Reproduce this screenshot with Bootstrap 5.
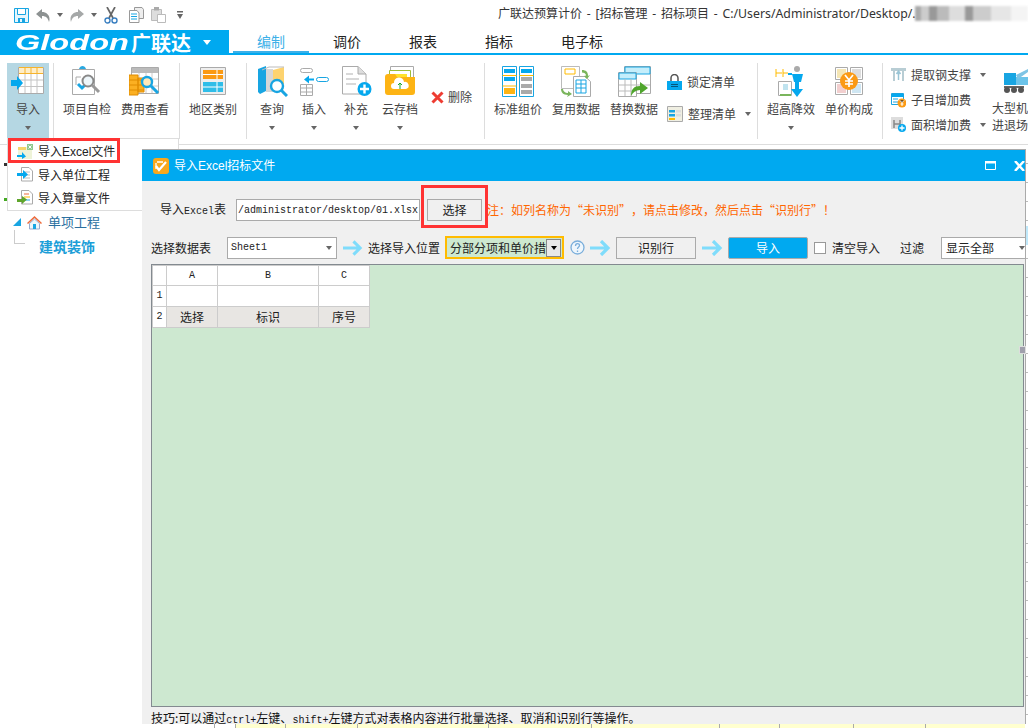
<!DOCTYPE html>
<html lang="zh-CN">
<head>
<meta charset="utf-8">
<title>广联达预算计价</title>
<link rel="stylesheet" href="https://cdn.jsdelivr.net/npm/bootstrap@5.3.0/dist/css/bootstrap.min.css">
<style>
html,body{height:728px;overflow:hidden}
body{font:12px/16px "Noto Sans CJK SC","Noto Sans",sans-serif;color:#222;background:#fff;position:relative;width:1028px}
svg{display:block;flex:none}
.lat{font:10px/16px "Liberation Mono",monospace}
.tbar{height:30px;padding-left:14px}
.qat{gap:7px}
.tri{display:inline-block;width:0;height:0;border:3.5px solid transparent;border-top:4px solid #666;border-bottom:0;flex:none}
.title-text{position:absolute;left:498px;top:6px;white-space:nowrap;font:12px/16px "Noto Sans","Noto Sans CJK SC",sans-serif;color:#333;word-spacing:1.7px}
.title-text span{font-size:12.3px}
.blur{position:absolute;left:915px;top:6px;width:113px;height:15px;filter:blur(1px);background:linear-gradient(90deg,#aaa 0 6px,#ccc 6px 14px,#999 14px 22px,#bbb 22px 34px,#ddd 34px 50px,#999 50px 58px,#ccc 58px 76px,#e6e6e6 76px 96px,#f4f4f4 96px)}
.tabbar{height:25px;border-bottom:2px solid #00a9f0}
.logo{width:229px;height:25px;background:#00a9f0;color:#fff;padding-left:15px;margin-bottom:-2px}
.logo-en{font:italic 700 22px/25px "Liberation Sans",sans-serif;width:116px;display:inline-block;transform:scaleX(1.48);transform-origin:0 50%}
.logo-cn{font:700 20px/25px "Noto Sans CJK SC",sans-serif;width:60px}
.logo .tri{border-top-color:#fff;border-width:4px;border-top-width:5px;border-bottom:0;margin-left:12px}
.tabx{width:76px;height:23px;text-align:center;font-size:14px;line-height:20px;color:#222;padding-top:1px}
.tabx.on{color:#3cb0e8;border-bottom:2px solid #3cb0e8}
.tabx.wide{width:90px}
.ribbon{height:90px;padding-top:8px;border-bottom:1px solid #ddd;color:#444}
.rgroup{height:76px;border-right:1px solid #ddd;padding:0 4px;flex:none}
.g1{width:54px;padding-left:7px}.g2{width:126px}.g3{width:67px}.g4{width:238px}.g5{width:273px}.g6{width:125px}.g7{border:0;padding:0 0 0 8px;width:145px}
.ritem{display:flex;flex-direction:column;align-items:center;white-space:nowrap;flex:none;width:58px}
.ritem.n42{width:42px}.ritem.n46{width:46px}
.ritem.act{background:#b5d7e3;height:76px}
.ricon{height:32px;margin-top:2px;display:flex;align-items:center;justify-content:center}
.rlbl{margin-top:4px}
.ritem .tri{margin-top:9px}
.rrow{height:25px;white-space:nowrap;gap:5px}
.stack5{margin-top:2px}
.stack7{width:101px;margin-top:-1px}
.stack7 .rrow{gap:5px}
.bigm{width:36px;align-items:flex-start!important}
.bigm .ricon{margin-left:10px;height:27px}
.bigm div:last-child{line-height:17px;margin-top:7px}
.work{position:relative;flex:1}
.leftp{width:142px;padding-top:69px;flex:none;position:relative}
.leftp i{position:absolute;display:block;left:4px;width:3px;height:3px}
.tree1{height:16px;color:#2a6f9f;font-size:13px;padding-left:13px;gap:6px}
.tree2{color:#1b9ed8;font-weight:700;font-size:14px;padding:8px 0 0 39px;line-height:16px;position:relative}
.tree2::before{content:"";position:absolute;left:14px;top:0;width:11px;height:14px;border:solid #ccc;border-width:0 0 1px 1px}
.strip{height:4px;margin-top:auto;background:#ffffcf}
.strip i{display:block;height:4px;border-right:1px solid #aaa;flex:none}
.strip i:first-child,.strip i:nth-child(2){background:#fff}
.ticks{position:absolute;right:0;top:0;bottom:0;width:3px;background:repeating-linear-gradient(180deg,#fff 0 18px,#bbb 18px 19px)}
.ticks::after{content:"";position:absolute;left:0;right:0;top:81px;height:19px;background:#bfe8fa}
.menuz{position:absolute;left:7px;top:138px;width:172px;height:73px;background:#fff;border:1px solid #ddd;border-radius:0;padding:1px 0 0;margin:0;display:block;min-width:0;font-size:12px;z-index:1}
.menuz .dropdown-item{display:flex;align-items:center;gap:5px;height:23px;padding:0 0 0 9px;color:#222;font:12px/16px "Noto Sans CJK SC",sans-serif}
.menuz .lse{font:12px/16px "Liberation Sans",sans-serif}
.redbox{position:absolute;border:3px solid #f33;z-index:5;pointer-events:none}
.rb1{left:8px;top:138px;width:112px;height:25px}
.rb2{left:421px;top:185px;width:67px;height:43px}
.dlg{position:absolute;left:142px;top:149px;width:884px;height:575px;background:#f0f0f0;border:solid #aaa;border-width:1px 1px 0 0;overflow:hidden;z-index:2}
.dlg-h{height:31px;background:#00a9f0;color:#fff;padding-left:11px;gap:5px;flex:none}
.dlg-h .ctrls{margin-left:auto;gap:18px}
.lse{font-family:"Liberation Sans",sans-serif}
.r1{height:22px;margin-top:18px;padding-left:18px;flex:none}
.r2{height:23px;margin-top:15px;padding-left:9px;flex:none;white-space:nowrap}
.inp{width:184px;height:22px;margin-left:10px;padding:0 0 0 1px;border:1px solid #aaa;border-radius:0;background:#fff;color:#222;font:10px/20px "Liberation Mono",monospace;box-shadow:none;flex:none}
.bbtn{height:22px;border:1px solid #aaa;border-radius:0;background:#f0f0f0;color:#222;font-size:12px;line-height:20px;padding:0;text-align:center;flex:none;width:80px}
.bbtn.b1{width:55px;margin-left:7px}
.bbtn.go{background:#00a9f0;color:#fff;border-radius:2px}
.note{color:#f60;margin-left:5px;white-space:nowrap}
.note i{display:inline-block;width:12px;font-style:normal}
.note i.ql{text-align:right}
.sel{height:22px;border:1px solid #aaa;background:#fff;padding:0 4px;justify-content:space-between;flex:none}
.s1{width:110px;margin-left:16px;padding-left:3px}
.s2{width:119px;height:23px;margin-left:5px;border:2px solid #fb0;background:#cde8d0;padding:0 1px 0 3px;white-space:nowrap;overflow:hidden;font-size:12px}
.s2 b{display:flex;width:15px;height:18px;background:#e8e8e8;border:1px solid #888;align-items:center;justify-content:center;flex:none}
.s2 .tri{border-top-color:#000}
.s3{width:85px;margin-left:17px;border-right:0;padding-right:1px}
.arrow1{margin:0 5px 0 6px}
.ml5{margin-left:5px}
.ml6{margin-left:6px}
.ml20{margin-left:20px}
.chk.form-check-input{width:12px;height:12px;margin:0 0 0 6px;border:1px solid #999;border-radius:0;flex:none}
.gridw{height:443px;margin:5px 1px 0 9px;background:#cde8d0;border:1px solid #838a90;overflow:hidden;flex:none}
.xgrid{width:217px;table-layout:fixed;margin:0;--bs-table-bg:#fff;--bs-border-color:#ccc;text-align:center;font-size:12px;line-height:16px;color:#222}
.xgrid>tbody>tr>td{padding:0;vertical-align:middle;border-width:1px;line-height:16px}
.xgrid>tbody>tr{height:21px}
.xgrid>tbody>tr:first-child{height:20px}
.xgrid>tbody>tr.hd>td{background:#e8e6e3;--bs-table-bg:#e8e6e3}
.xgrid>tbody>tr.hd>td.rowh{background:#fff;--bs-table-bg:#fff}
.tip{padding:5px 0 0 9px;white-space:nowrap;color:#111;line-height:12px}
.tip .lat{line-height:12px}
.handle{position:absolute;left:1019px;top:346px;width:7px;height:8px;background:#a0a0ac;border:1px solid #ddd;z-index:4}
</style>
</head>
<body class="d-flex flex-column">

<header class="tbar d-flex align-items-center">
  <div class="qat d-flex align-items-center">
    <svg width="15" height="15" viewBox="0 0 15 15"><path d="M.5.5h14v14H.5z" fill="#e4f6fd" stroke="#18a5e2"/><path d="M3.500 1v5.500h8V1" fill="#fff" stroke="#18a5e2"/><path d="M4 10h7v5H4z" fill="#18a5e2"/><path d="M6 11h2v3H6z" fill="#e4f6fd"/></svg>
    <svg width="14" height="13" viewBox="0 0 14 13"><path d="M6 0 0 5l6 5V7c4 0 6 2 7 6 2-6-2-10-7-10z" fill="#8d9292"/></svg>
    <i class="tri"></i>
    <svg width="14" height="13" viewBox="0 0 14 13"><path d="M8 0l6 5-6 5V7c-4 0-6 2-7 6-2-6 2-10 7-10z" fill="#a5a8a8"/></svg>
    <i class="tri"></i>
    <svg width="14" height="17" viewBox="0 0 14 17"><path d="M3 0l6 11M11 0 5 11" stroke="#666" stroke-width="1.700"/><circle cx="3.500" cy="13.500" r="2.500" fill="none" stroke="#3a7fc0" stroke-width="1.400"/><circle cx="10.500" cy="13.500" r="2.500" fill="none" stroke="#3a7fc0" stroke-width="1.400"/></svg>
    <svg class="ms-1" width="15" height="16" viewBox="0 0 15 16"><path d="M5.500.5H13l1.500 2v9h-9z" fill="#eee" stroke="#999"/><path d="M.5 3.500H8L10 6v9.500H.5z" fill="#fff" stroke="#999"/><path d="M2 7h6M2 9.500h6M2 12h6" stroke="#18a5e2"/></svg>
    <svg width="15" height="16" viewBox="0 0 15 16"><path d="M.5 2.500h10v11H.5z" fill="#ddd" stroke="#bbb"/><path d="M3 0h5v3.500H3z" fill="#aaa"/><path d="M6.500 7.500h8v8h-8z" fill="#fff" stroke="#bbb"/></svg>
    <svg class="ms-1" width="6" height="9" viewBox="0 0 6 9"><path d="M0 0h6v1.500H0zM0 3h6L3 8z" fill="#666"/></svg>
  </div>
  <div class="title-text">广联达预算计价 - [招标管理 - 招标项目 - <span>C:/Users/Administrator/Desktop/.</span></div>
  <div class="blur"></div>
</header>

<nav class="tabbar d-flex">
  <div class="logo d-flex align-items-center">
    <span class="logo-en">Glodon</span><span class="logo-cn">广联达</span><i class="tri"></i>
  </div>
  <div class="d-flex ms-1">
    <div class="tabx on">编制</div><div class="tabx">调价</div><div class="tabx">报表</div><div class="tabx">指标</div><div class="tabx wide">电子标</div>
  </div>
</nav>

<section class="ribbon d-flex">
  <div class="rgroup g1 d-flex">
    <div class="ritem n42 act">
      <div class="ricon"><svg width="34" height="30" viewBox="0 0 34 30"><path d="M7.500 1.500h25v26h-25z" fill="#fff" stroke="#aaa"/><path d="M8 2h24v5H8z" fill="#ffeec8"/><path d="M8 1.500h24M8 7.500h24M14 2v5M20 2v5M26 2v5" stroke="#f5b32d"/><path d="M8 14h24M8 20.500h24M14 8v19M20 8v19M26 8v19" stroke="#c4c4c4"/><path d="M0 14h6v-4l6 7-6 7v-4H0z" fill="#05a8ee"/></svg></div>
      <div class="rlbl">导入</div><i class="tri"></i>
    </div>
  </div>
  <div class="rgroup g2 d-flex">
    <div class="ritem">
      <div class="ricon"><svg width="32" height="30" viewBox="0 0 32 30"><path d="M1.500 3.500h22v25h-22z" fill="#fff" stroke="#aaa"/><path d="M8 3c1-4 6-4 7 0z" fill="#29a8e0"/><path d="M5 11h5M5 11v8" stroke="#aaa" fill="none"/><path d="M7 18l4 4 6-6" stroke="#18a5e2" stroke-width="3" fill="none"/><circle cx="17" cy="15" r="5.500" fill="#eef6fa" stroke="#888" stroke-width="2"/><path d="M21 19l7 7" stroke="#999" stroke-width="3"/></svg></div>
      <div class="rlbl">项目自检</div>
    </div>
    <div class="ritem">
      <div class="ricon"><svg width="32" height="30" viewBox="0 0 32 30"><path d="M2.500 1.500h27v26h-27z" fill="#fff" stroke="#aaa"/><path d="M3 2h26v5H3z" fill="#bbb"/><path d="M10 7v20M17 7v20M23 7v20M3 13h26M3 20h26" stroke="#ccc"/><path d="M0 9h9v20H0zM9 12h6v14H9z" fill="#fbb022" stroke="#e08c00"/><path d="M0 14h15M0 19h15M0 24h15" stroke="#e08c00"/><circle cx="18" cy="16" r="5" fill="#ffe8b8" stroke="#18a5e2" stroke-width="2.400"/><path d="M22 20l7 7" stroke="#18a5e2" stroke-width="3"/></svg></div>
      <div class="rlbl">费用查看</div>
    </div>
  </div>
  <div class="rgroup g3 d-flex">
    <div class="ritem">
      <div class="ricon"><svg width="26" height="28" viewBox="0 0 26 28"><path d="M.5.500h25v27H.500z" fill="#eee" stroke="#aaa"/><path d="M3 3h20v9H3z" fill="#fb9a14"/><path d="M3 15h20v10H3z" fill="#2fbde8"/><path d="M3 7.500h20M3 20h20M17 3v9M17 15v10" stroke="#fff"/></svg></div>
      <div class="rlbl">地区类别</div>
    </div>
  </div>
  <div class="rgroup g4 d-flex">
    <div class="ritem n42">
      <div class="ricon"><svg width="31" height="31" viewBox="0 0 31 31"><path d="M1 3l8-3v25l-6 3-2-2z" fill="#18a5e2"/><path d="M9 3h7v23H9z" fill="#d7d7d7"/><path d="M16 4l11-3v17l-11 8z" fill="#fdd36f"/><path d="M5 4l7-3h15" stroke="#bbb" fill="none"/><circle cx="20" cy="20" r="6" fill="#fff" stroke="#18a5e2" stroke-width="2.400"/><path d="M24 24l6 6" stroke="#18a5e2" stroke-width="3"/></svg></div>
      <div class="rlbl">查询</div><i class="tri"></i>
    </div>
    <div class="ritem n42">
      <div class="ricon"><svg width="29" height="29" viewBox="0 0 29 29"><rect x=".5" y="1.500" width="12" height="4" rx="2" fill="#fff" stroke="#aaa"/><rect x="16.500" y="10.500" width="12" height="4" rx="2" fill="#fff" stroke="#18a5e2"/><path d="M4 12.500l5-4v3h5v2H9v3z" fill="#05a8ee"/><path d="M.5 17.500h12v11H.5zM.5 21h12M.5 25h12M6.500 18v10" fill="none" stroke="#aaa"/></svg></div>
      <div class="rlbl">插入</div><i class="tri"></i>
    </div>
    <div class="ritem n42">
      <div class="ricon"><svg width="31" height="30" viewBox="0 0 31 30"><path d="M1.500.500H17L25 8v20H1.500z" fill="#fff" stroke="#aaa"/><path d="M17 1v7h8" fill="#ddd" stroke="#aaa"/><path d="M5 8h7M5 13h13M5 18h10" stroke="#ccc" stroke-width="1.300"/><circle cx="23.500" cy="23" r="7" fill="#05a8ee"/><path d="M23.500 18.500v9M19 23h9" stroke="#fff" stroke-width="2.400"/></svg></div>
      <div class="rlbl">补充</div><i class="tri"></i>
    </div>
    <div class="ritem n46">
      <div class="ricon"><svg width="30" height="30" viewBox="0 0 30 30"><path d="M5.500.5h23v14h-23z" fill="#fff" stroke="#aaa"/><path d="M4.500 4.500h21v14h-21z" fill="#fff" stroke="#9ebd38"/><path d="M3 8h19v10H3z" fill="#ffe22c"/><path d="M0 11c0-2 1-3 3-3h7l2 3h18v15c0 2-1 3-3 3H3c-2 0-3-1-3-3z" fill="#fdb414"/><path d="M9 23a3 3 0 0 1 0-6 5 5 0 0 1 10-1 3.500 3.500 0 0 1 2 7z" fill="#fff"/><path d="M15 23v-6M13 19l2-2 2 2" stroke="#1aa52c" fill="none"/></svg></div>
      <div class="rlbl">云存档</div><i class="tri"></i>
    </div>
    <div class="d-flex align-items-center ms-1 ps-1 pb-2 gap-1">
      <svg width="13" height="13" viewBox="0 0 13 13"><path d="M1.500 1.500l10 10M11.500 1.500l-10 10" stroke="#ee3c32" stroke-width="3"/></svg>
      <span>删除</span>
    </div>
  </div>
  <div class="rgroup g5 d-flex">
    <div class="ritem">
      <div class="ricon"><svg width="32" height="31" viewBox="0 0 32 31"><path d="M.5.500h14v30H.500z" fill="#fff" stroke="#18a5e2"/><path d="M2 3h11v4H2z" fill="#05a8ee"/><path d="M.5 9.500h14M.5 20h14" stroke="#fb0"/><path d="M2 11h11v4H2z" fill="#05a8ee"/><path d="M2 22h11v6H2z" fill="#fdb414"/><path d="M17.500.5h14v30h-14z" fill="#fff" stroke="#18a5e2"/><path d="M19 3h11v4H19z" fill="#05a8ee"/><path d="M17.500 9.500h14" stroke="#fb0"/><path d="M19 11h11v4H19zM19 18h11v4H19zM19 24h11v4H19z" fill="#aaa"/></svg></div>
      <div class="rlbl">标准组价</div>
    </div>
    <div class="ritem">
      <div class="ricon"><svg width="30" height="31" viewBox="0 0 30 31"><path d="M.5.500h18v22H.500z" fill="#fff" stroke="#bbb"/><path d="M4 3h10v5H4z" fill="#fff" stroke="#fb0"/><path d="M12.500 10.500H24l5.500 5v15h-17z" fill="#fff" stroke="#aaa"/><path d="M15 14h10v13H15zM15 18h10M15 22h10M20 14v13" fill="none" stroke="#18a5e2"/><path d="M21 4c4 0 6 2 6 6l2-1-3 4-3-3 2-.500c0-2-2-3-4-3z" fill="#7ab55c"/><path d="M0 23c0 3 2 6 7 6l-1 2 5-3-4-3v2c-3 0-5-2-5-4z" fill="#7ab55c"/></svg></div>
      <div class="rlbl">复用数据</div>
    </div>
    <div class="ritem">
      <div class="ricon"><svg width="33" height="31" viewBox="0 0 33 31"><path d="M6.500.5h26v27h-26z" fill="#fff" stroke="#aaa"/><path d="M7 1h25v7H7z" fill="#c5eefb" stroke="#18a5e2"/><path d="M.5 6.500h18v24H.500z" fill="#fff" stroke="#aaa"/><path d="M1 7h17v6H1z" fill="#c5eefb" stroke="#18a5e2"/><path d="M1 19h17M1 25h17M7 13v17M13 13v17M18 19h14" stroke="#bbb"/><path d="M13 30c0-7 3-10 9-10v-4l8 6-8 6v-4c-4 0-7 2-9 6z" fill="#4fa52c"/></svg></div>
      <div class="rlbl">替换数据</div>
    </div>
    <div class="ms-1 stack5">
      <div class="rrow d-flex align-items-center mt-1" style="margin-bottom:7px"><svg width="15" height="16" viewBox="0 0 15 16"><path d="M4 7V4a3.500 3.500 0 0 1 7 0v3" fill="none" stroke="#555" stroke-width="1.500"/><path d="M0 7h15v9H0z" fill="#05a8ee"/><path d="M4 10.500h7M4 12.500h7" stroke="#04567c"/></svg><span>锁定清单</span></div>
      <div class="rrow d-flex align-items-center"><svg width="16" height="16" viewBox="0 0 16 16"><path d="M.5.500h15v15H.500z" fill="#f0efe2" stroke="#aaa"/><path d="M2 4h6v2.500H2zM2 8h6v2.500H2z" fill="#18a5e2"/><path d="M2 12h6v2H2z" fill="#fb0"/><path d="M9 4h5v2.500H9zM9 8h5v2.500H9z" fill="#ddd"/></svg><span>整理清单</span><i class="tri ms-1"></i></div>
    </div>
  </div>
  <div class="rgroup g6 d-flex">
    <div class="ritem">
      <div class="ricon"><svg width="32" height="31" viewBox="0 0 32 31"><path d="M1 3v8M8 3v8M1 7h6M8 7h5" stroke="#fb0" fill="none"/><path d="M3.500 15.500h13v14h-13z" fill="#fff" stroke="#aaa"/><path d="M5 28h11v2H5z" fill="#7ab55c"/><path d="M8 18h5v6H8z" fill="#bfe3ef"/><circle cx="22" cy="3" r="3" fill="#aaa"/><path d="M17 8h11l-2 8h-7zM13 7h4v2h-4z" fill="#05a8ee"/><path d="M20 16h4v7h4l-6 8-6-8h4z" fill="#05a8ee"/></svg></div>
      <div class="rlbl">超高降效</div><i class="tri"></i>
    </div>
    <div class="ritem">
      <div class="ricon"><svg width="30" height="30" viewBox="0 0 30 30"><path d="M1.500 1.500h12v12h-12zM16.500 1.500h12v12h-12zM1.500 16.500h12v12h-12zM16.500 16.500h12v12h-12z" fill="#fff" stroke="#aaa"/><path d="M3 3h9v9H3z" fill="#f5e6b5"/><path d="M18 3h9v9h-9z" fill="#ddd"/><path d="M3 18h9v9H3z" fill="#f2cfcf"/><path d="M18 18h9v9h-9z" fill="#cfe6f2"/><circle cx="15" cy="15" r="9" fill="#fb9a14"/><path d="M11 9l4 5 4-5M15 14v7M11 15h8M11 18h8" stroke="#fff" stroke-width="1.700" fill="none"/></svg></div>
      <div class="rlbl">单价构成</div>
    </div>
  </div>
  <div class="rgroup g7 d-flex">
    <div class="stack7 flex-shrink-0">
      <div class="rrow d-flex align-items-center"><svg width="15" height="13" viewBox="0 0 15 13"><path d="M0 0h15v3H0zM2 3h2v10H2zM11 3h2v10h-2z" fill="#b8cdd4"/><path d="M7.500 3v9M5.500 6l2-3 2 3" stroke="#9ac5d6" fill="none" stroke-width="1.500"/></svg><span>提取钢支撑</span><i class="tri ms-1"></i></div>
      <div class="rrow d-flex align-items-center"><svg width="15" height="16" viewBox="0 0 15 16"><path d="M.5 1.500h12v11H.500z" fill="#fff" stroke="#18a5e2"/><path d="M1 2h11v3H1z" fill="#05a8ee"/><path d="M2 7h5M2 10h5" stroke="#18a5e2"/><circle cx="11" cy="11" r="4.500" fill="#fb9a14"/><path d="M9 8.500l2 2 2-2M11 10.500V14M9.500 12h3" stroke="#fff"/></svg><span>子目增加费</span></div>
      <div class="rrow d-flex align-items-center"><svg width="15" height="15" viewBox="0 0 15 15"><path d="M0 0h12v12H0z" fill="#ddd"/><path d="M3 3v8M9 3v8M3 7h6" stroke="#888" stroke-width="1.500"/><circle cx="11" cy="11" r="4" fill="#05a8ee"/><path d="M11 8.500v5M8.500 11h5" stroke="#fff" stroke-width="1.300"/></svg><span>面积增加费</span><i class="tri ms-1"></i></div>
    </div>
    <div class="ritem bigm">
      <div class="ricon"><svg width="26" height="28" viewBox="0 0 26 28"><path d="M2 8h12v12H2z" fill="#18a5e2"/><path d="M14 12h12v8H14z" fill="#6cc4ea"/><path d="M14 10 26 4v3L16 14z" fill="#7fc4e4"/><path d="M2 21h20v2H2z" fill="#666"/><circle cx="5" cy="25" r="3" fill="#555"/><circle cx="12" cy="25" r="3" fill="#555"/><circle cx="19" cy="25" r="3" fill="#555"/></svg></div>
      <div>大型机<br>进退场</div>
    </div>
  </div>
</section>

<main class="work d-flex">
  <aside class="leftp">
    <i style="top:18px;background:#333"></i><i style="top:53px;background:#4a2"></i>
    <div class="tree1 d-flex align-items-center">
      <svg width="8" height="8" viewBox="0 0 8 8"><path d="M8 0v8H0z" fill="#18a5e2"/></svg>
      <svg width="15" height="15" viewBox="0 0 15 15"><path d="M7.500 1 0 8l1 1 6.500-6L14 9l1-1z" fill="#ee6a3a"/><path d="M2.500 8.500l5-4.500 5 4.500V14h-10z" fill="#eef6fa" stroke="#9ac"/><path d="M6 9h3v5H6z" fill="#18a5e2"/></svg>
      <span>单项工程</span>
    </div>
    <div class="tree2">建筑装饰</div>
  </aside>
  <div class="flex-grow-1 d-flex flex-column">
    <div class="strip d-flex"><i style="width:73px"></i><i style="width:21px"></i><i style="width:50px"></i><i style="width:72px"></i><i style="width:131px"></i><i style="width:103px"></i><i style="width:128px"></i><i style="width:60px"></i><i style="width:74px"></i><i style="width:72px"></i></div>
  </div>
  <div class="ticks"></div>
</main>

<ul class="dropdown-menu menuz">
  <li><a class="dropdown-item" href="#"><svg width="16" height="15" viewBox="0 0 16 15"><path d="M1 3h14v12H1z" fill="#eef3d8"/><path d="M1 3h8v3H1z" fill="#f6d56a"/><path d="M10 0h6v6h-6z" fill="#8fc98f"/><path d="M11.500 1.500l3 3M14.500 1.500l-3 3" stroke="#fff"/><path d="M0 11h5V8l4 4.500L5 15v-2H0z" fill="#05a8ee"/></svg><span>导入<span class="lse">Excel</span>文件</span></a></li>
  <li><a class="dropdown-item" href="#"><svg width="16" height="15" viewBox="0 0 16 15"><path d="M4.500.5H12l3.500 3.500v10h-11z" fill="#fff" stroke="#aaa"/><path d="M7 5h6M7 8h6M7 11h6" stroke="#bbb"/><path d="M0 6h6V3l5 4.500L6 12V9H0z" fill="#05a8ee"/></svg><span>导入单位工程</span></a></li>
  <li><a class="dropdown-item" href="#"><svg width="16" height="15" viewBox="0 0 16 15"><path d="M4.500.5H12l3.500 3.500v10h-11z" fill="#fff" stroke="#aaa"/><path d="M7 4h5" stroke="#ee6a3a"/><path d="M7 7h6" stroke="#fb0"/><path d="M7 10h6" stroke="#18a5e2"/><path d="M0 9h5V6l5 3.500L5 14v-2H0z" fill="#5fa52c"/></svg><span>导入算量文件</span></a></li>
</ul>
<div class="redbox rb1"></div>

<div class="dlg d-flex flex-column">
  <div class="dlg-h d-flex align-items-center">
    <svg width="16" height="16" viewBox="0 0 16 16"><rect width="16" height="16" rx="3" fill="#f8a81c"/><path d="M3 8l3 4 7-8" stroke="#fff" stroke-width="2.200" fill="none"/><path d="M4 4h6M3 5v6" stroke="#fff" stroke-width="1.300" fill="none"/></svg>
    <span>导入<span class="lse">Excel</span>招标文件</span>
    <div class="ctrls d-flex align-items-center">
      <svg width="11" height="9" viewBox="0 0 11 9"><path d="M.5.500h10v8H.500z" fill="none" stroke="#fff"/><path d="M0 0h11v2.500H0z" fill="#fff"/></svg>
      <svg width="11" height="10" viewBox="0 0 11 10"><path d="M1 0l9 10M10 0 1 10" stroke="#fff" stroke-width="2.400"/></svg>
    </div>
  </div>
  <div class="r1 d-flex align-items-center">
    <span class="text-nowrap">导入<span class="lat">Excel</span>表</span>
    <input class="form-control inp" value="/administrator/desktop/01.xlsx">
    <button class="btn bbtn b1" type="button">选择</button>
    <span class="note">注：如列名称为<i class="ql">“</i>未识别<i>”</i>，请点击修改，然后点击<i class="ql">“</i>识别行<i>”</i>！</span>
  </div>
  <div class="r2 d-flex align-items-center">
    <span>选择数据表</span>
    <div class="sel s1 d-flex align-items-center lat"><span>Sheet1</span><i class="tri"></i></div>
    <svg class="arrow1" width="20" height="16" viewBox="0 0 21 16"><path d="M0 8h18M11 1l7 7-7 7" fill="none" stroke="#7fdcfb" stroke-width="3.200"/></svg>
    <span>选择导入位置</span>
    <div class="sel s2 d-flex align-items-center"><span>分部分项和单价措</span><b><i class="tri"></i></b></div>
    <svg class="ml6" width="15" height="15" viewBox="0 0 15 15"><circle cx="7.500" cy="7.500" r="6.500" fill="#eef6fc" stroke="#7aaedb" stroke-width="1.300"/><path d="M5.500 6c0-3 4-3 4-.5 0 1.500-2 1.500-2 3.500M7.500 10.500v1.500" fill="none" stroke="#7aaedb" stroke-width="1.300"/></svg>
    <svg class="ml5" width="21" height="16" viewBox="0 0 21 16"><path d="M0 8h18M11 1l7 7-7 7" fill="none" stroke="#7fdcfb" stroke-width="3.200"/></svg>
    <button class="btn bbtn ml5" type="button">识别行</button>
    <svg class="ml6" width="21" height="16" viewBox="0 0 21 16"><path d="M0 8h18M11 1l7 7-7 7" fill="none" stroke="#7fdcfb" stroke-width="3.200"/></svg>
    <button class="btn bbtn go ml5" type="button">导入</button>
    <input class="form-check-input chk" type="checkbox">
    <span class="ml6">清空导入</span>
    <span class="ml20">过滤</span>
    <div class="sel s3 d-flex align-items-center"><span>显示全部</span><i class="tri"></i></div>
  </div>
  <div class="gridw">
    <table class="table table-bordered xgrid">
      <colgroup><col style="width:14px"><col style="width:51px"><col style="width:101px"><col style="width:51px"></colgroup>
      <tbody>
        <tr><td></td><td class="lat">A</td><td class="lat">B</td><td class="lat">C</td></tr>
        <tr><td class="lat">1</td><td></td><td></td><td></td></tr>
        <tr class="hd"><td class="lat rowh">2</td><td>选择</td><td>标识</td><td>序号</td></tr>
      </tbody>
    </table>
  </div>
  <div class="tip">技巧:可以通过<span class="lat">ctrl+</span>左键、<span class="lat">shift+</span>左键方式对表格内容进行批量选择、取消和识别行等操作。</div>
</div>
<div class="redbox rb2"></div>
<div class="handle"></div>

</body>
</html>
